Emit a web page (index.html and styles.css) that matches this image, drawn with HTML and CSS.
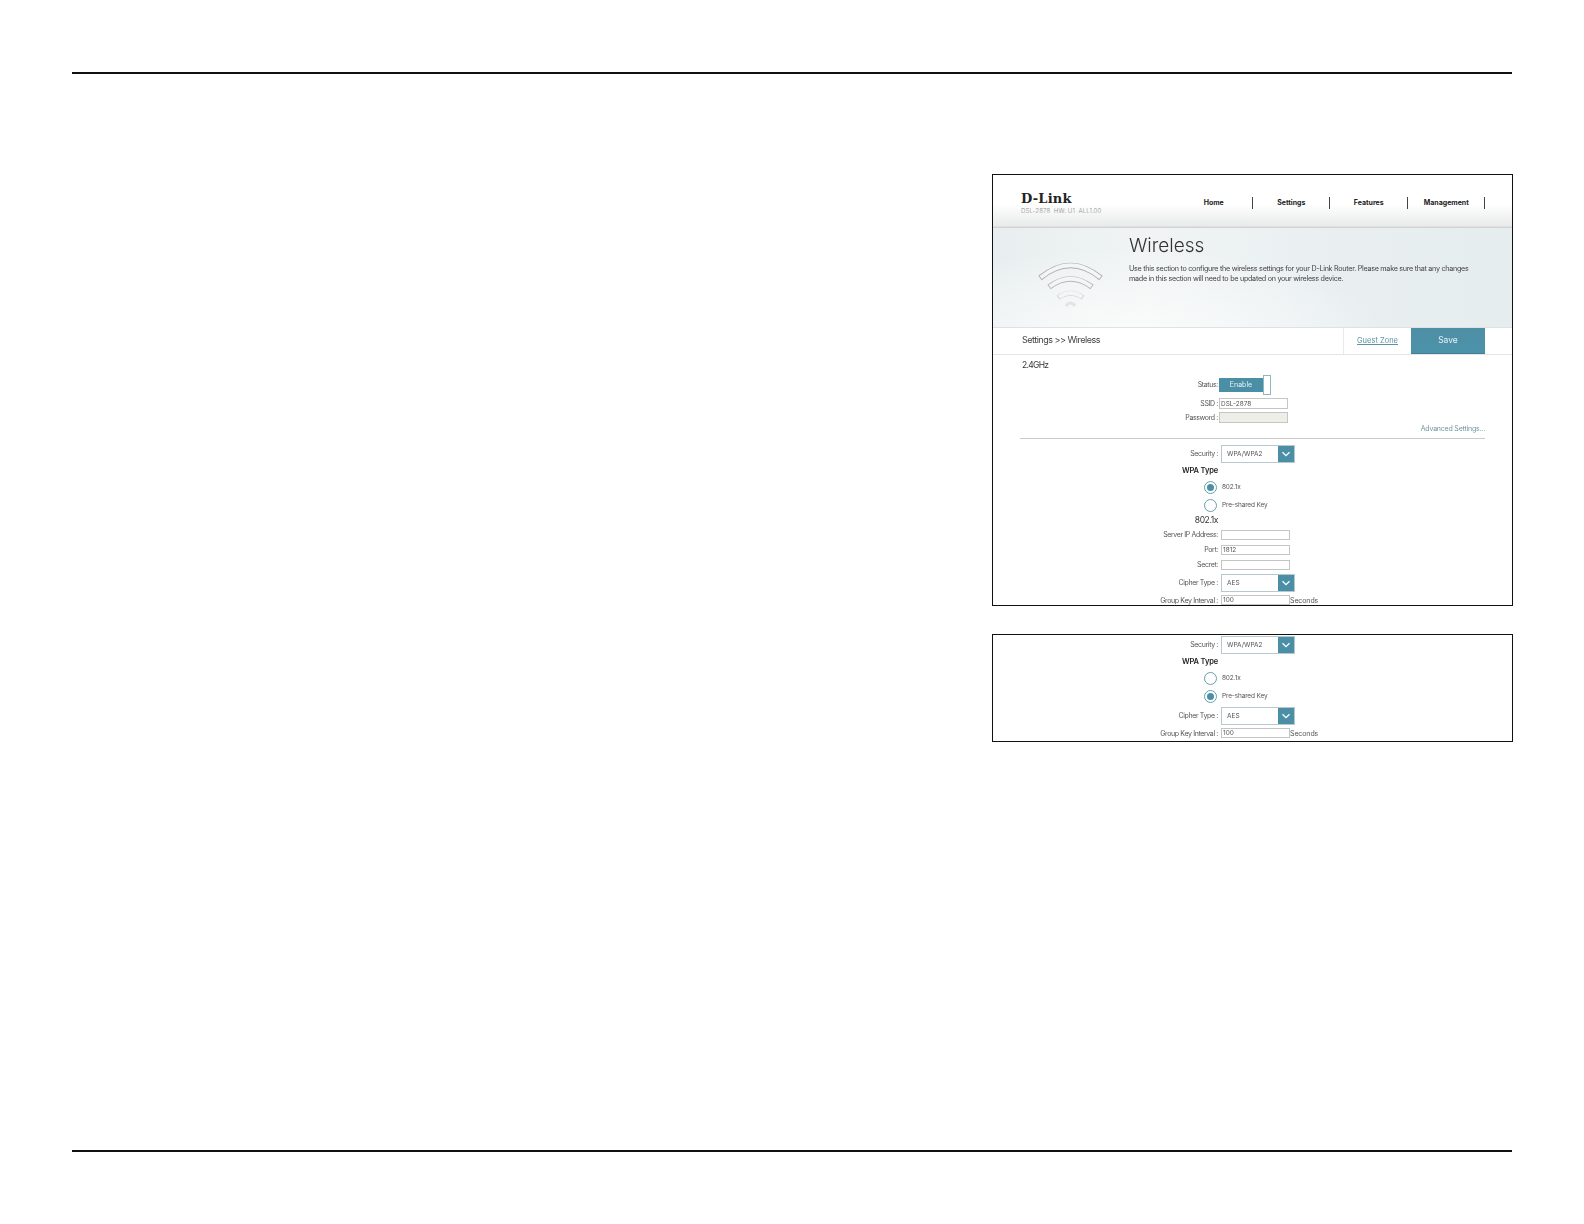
FILE: index.html
```html
<!DOCTYPE html>
<html lang="en">
<head>
<meta charset="utf-8">
<title>Wireless Settings</title>
<link rel="stylesheet" href="styles.css">
</head>
<body>
<div class="page">
  <main class="content">
    <section class="shot shot-main">
      <div class="shot-inner">
        <header class="topbar">
          <div class="brand">
            <div class="logo">D-Link</div>
            <div class="model">DSL-2878&nbsp; HW: U1 &nbsp;ALL1.00</div>
          </div>
          <nav class="nav">
            <span class="nav-item">Home</span>
            <span class="nav-item">Settings</span>
            <span class="nav-item">Features</span>
            <span class="nav-item">Management</span>
          </nav>
        </header>
        <div class="banner">
          <div class="banner-icon">
            <svg width="80" height="60" viewBox="0 0 80 60" aria-hidden="true">
              <g fill="none">
                <path class="arc-o1" d="M9 20 Q39.500 -5 70 20"/>
                <path class="arc-i" d="M9.700 19.500 Q39.500 -5 69.300 19.500"/>
                <path class="arc-o2" d="M18 29 Q39.500 13 61 29"/>
                <path class="arc-i" d="M18.700 28.500 Q39.500 13 60.300 28.500"/>
                <path class="arc-o3" d="M27 39.500 Q39.500 31 52 39.500"/>
                <path class="arc-i" d="M27.700 39 Q39.500 31 51.300 39"/>
                <path class="arc-o4" d="M35 48 Q39.500 42 44 48"/>
              </g>
            </svg>
          </div>
          <div class="banner-text">
            <h1 class="title">Wireless</h1>
            <p class="desc">Use this section to configure the wireless settings for your D-Link Router. Please make sure that any changes<br>made in this section will need to be updated on your wireless device.</p>
          </div>
        </div>
        <div class="crumbbar">
          <div class="crumb">Settings &gt;&gt; Wireless</div>
          <a class="guest">Guest Zone</a>
          <div class="save">Save</div>
        </div>
        <div class="form">
          <div class="section-title">2.4GHz</div>
          <div class="row row-status">
            <span class="label">Status:</span>
            <div class="toggle"><span class="toggle-on">Enable</span><span class="toggle-knob"></span></div>
          </div>
          <div class="row row-ssid">
            <span class="label">SSID :</span>
            <span class="field field-near">DSL-2878</span>
          </div>
          <div class="row row-ssid">
            <span class="label">Password :</span>
            <span class="field field-near field-off"></span>
          </div>
          <div class="advanced">Advanced Settings...</div>
          <div class="rule"></div>
          <div class="row row-select row-first">
            <span class="label">Security :</span>
            <div class="select"><span class="select-text">WPA/WPA2</span><span class="select-arrow"><svg width="10" height="6" viewBox="0 0 10 6"><path d="M1.5 1.2 5 4.6 8.500 1.200" fill="none" stroke="#fff" stroke-width="1.300"/></svg></span></div>
          </div>
          <div class="row row-heading"><span class="label label-strong">WPA Type</span></div>
          <div class="row row-radio">
            <span class="label"></span>
            <span class="radio radio-on"></span><span class="radio-text">802.1x</span>
          </div>
          <div class="row row-radio">
            <span class="label"></span>
            <span class="radio"></span><span class="radio-text">Pre-shared Key</span>
          </div>
          <div class="row row-sub"><span class="label label-sub">802.1x</span></div>
          <div class="row row-field"><span class="label">Server IP Address:</span><span class="field"></span></div>
          <div class="row row-field"><span class="label">Port:</span><span class="field">1812</span></div>
          <div class="row row-field"><span class="label">Secret:</span><span class="field"></span></div>
          <div class="row row-select row-cipher">
            <span class="label">Cipher Type :</span>
            <div class="select"><span class="select-text">AES</span><span class="select-arrow"><svg width="10" height="6" viewBox="0 0 10 6"><path d="M1.5 1.2 5 4.6 8.500 1.200" fill="none" stroke="#fff" stroke-width="1.300"/></svg></span></div>
          </div>
          <div class="row row-group">
            <span class="label">Group Key Interval :</span><span class="field">100</span><span class="unit">Seconds</span>
          </div>
        </div>
      </div>
    </section>

    <section class="shot shot-second">
      <div class="shot-inner">
        <div class="form form-second">
          <div class="row row-select">
            <span class="label">Security :</span>
            <div class="select"><span class="select-text">WPA/WPA2</span><span class="select-arrow"><svg width="10" height="6" viewBox="0 0 10 6"><path d="M1.5 1.2 5 4.6 8.500 1.200" fill="none" stroke="#fff" stroke-width="1.300"/></svg></span></div>
          </div>
          <div class="row row-heading2"><span class="label label-strong">WPA Type</span></div>
          <div class="row row-radio">
            <span class="label"></span>
            <span class="radio"></span><span class="radio-text">802.1x</span>
          </div>
          <div class="row row-radio">
            <span class="label"></span>
            <span class="radio radio-on"></span><span class="radio-text">Pre-shared Key</span>
          </div>
          <div class="row row-select row-cipher2">
            <span class="label">Cipher Type :</span>
            <div class="select"><span class="select-text">AES</span><span class="select-arrow"><svg width="10" height="6" viewBox="0 0 10 6"><path d="M1.5 1.2 5 4.6 8.500 1.200" fill="none" stroke="#fff" stroke-width="1.300"/></svg></span></div>
          </div>
          <div class="row row-group">
            <span class="label">Group Key Interval :</span><span class="field">100</span><span class="unit">Seconds</span>
          </div>
        </div>
      </div>
    </section>
  </main>
</div>
</body>
</html>
```
FILE: styles.css
```css
* { box-sizing: border-box; }
html, body { margin: 0; padding: 0; background: #fff; }
body { font-family: Inter, "Liberation Sans", sans-serif; color: #333; }

.page {
  width: 1584px;
  height: 1224px;
  padding: 72px 72px 0;
}
.content {
  height: 1080px;
  border-top: 2px solid #111;
  border-bottom: 2px solid #111;
  padding-top: 100px;
  display: flex;
  flex-direction: column;
  align-items: flex-end;
  gap: 28px;
}

.shot {
  width: 521px;
  margin-right: -1px;
  border: 1px solid #111;
  overflow: hidden;
  flex: none;
}
.shot-main { height: 432px; }
.shot-second { height: 108px; }
.shot-inner { filter: blur(0.4px); }

/* top bar */
.topbar {
  height: 53px;
  display: flex;
  justify-content: space-between;
  padding: 0 27px 0 28px;
  background: linear-gradient(#fff 0, #fff 55%, #e9eaea 96%, #c9cccc 100%);
}
.brand { padding-top: 17px; }
.logo {
  font-family: "DejaVu Serif", serif;
  font-weight: 700;
  font-size: 13px;
  line-height: 14px;
  letter-spacing: 0.2px;
  color: #222;
}
.model {
  margin-top: 1px;
  font-size: 6.200px;
  line-height: 8px;
  letter-spacing: 0.050px;
  font-weight: 300;
  color: #8f8f8f;
}
.nav { display: flex; padding-top: 22px; }
.nav-item {
  width: 77.500px;
  height: 12px;
  border-right: 1px solid #444;
  font-size: 7px;
  line-height: 12px;
  font-weight: 700;
  text-align: center;
  text-indent: 1px;
  color: #222;
}

/* banner */
.banner {
  height: 100px;
  display: flex;
  border-bottom: 1px solid #dfe2e2;
  background:
    radial-gradient(ellipse 260px 90px at 26% 110%, #fbfcfc 0, rgba(251,252,252,0) 100%),
    linear-gradient(90deg, #e8eeef 0, #f0f4f4 30%, #e9eff1 65%, #e6edef 100%);
}
.banner-icon { width: 136px; padding: 30px 0 0 38px; flex: none; }
.arc-o1 { stroke: #adafaf; stroke-width: 5.500; }
.arc-o2 { stroke: #b4b6b6; stroke-width: 5.500; }
.arc-o3 { stroke: #cfd1d1; stroke-width: 5; }
.arc-o4 { stroke: #e2e4e4; stroke-width: 3; }
.arc-i { stroke: #f4f6f6; stroke-width: 3.800; }
.banner-text { padding-top: 6px; }
.title {
  margin: 0;
  font-size: 19px;
  line-height: 24px;
  font-weight: 300;
  color: #333;
}
.desc {
  margin: 5.500px 0 0;
  white-space: nowrap;
  font-size: 7.200px;
  line-height: 10.500px;
  letter-spacing: -0.280px;
  color: #444;
}

/* breadcrumb */
.crumbbar {
  height: 27px;
  display: flex;
  align-items: stretch;
  padding-right: 27px;
  border-bottom: 1px solid #e4e6e6;
}
.crumb {
  flex: 1;
  padding-left: 29px;
  font-size: 9px;
  line-height: 24px;
  letter-spacing: -0.500px;
  color: #444;
}
.guest {
  width: 68px;
  border-left: 1px solid #e8eaea;
  font-size: 7.500px;
  line-height: 26px;
  text-align: center;
  text-decoration: underline;
  color: #5a93a6;
}
.save {
  width: 74px;
  background: linear-gradient(#4f8fa5, #4b93aa);
  border-bottom: 1px solid #3f7f95;
  color: #e8f2f5;
  font-size: 8.500px;
  line-height: 24px;
  text-align: center;
}

/* form */
.form { padding: 0 27px 0 0; }
.section-title {
  height: 20px;
  padding-left: 29px;
  font-size: 8.500px;
  line-height: 20px;
  letter-spacing: -0.700px;
  color: #333;
}
.row {
  display: flex;
  align-items: center;
  font-size: 7px;
  letter-spacing: -0.370px;
  color: #555;
}
.label {
  width: 225px;
  flex: none;
  text-align: right;
  white-space: nowrap;
}
.row-status .label, .row-select .label { margin-top: -1px; }
.label-strong { font-weight: 600; font-size: 7.500px; letter-spacing: -0.150px; color: #222; }
.label-sub { font-size: 8.500px; letter-spacing: -0.400px; color: #333; }
.row-status { height: 20px; gap: 1px; }
.row-ssid { height: 11px; margin-top: 3px; gap: 1px; }
.row-select { height: 18px; gap: 3px; }
.row-first { margin-top: 6px; }
.row-heading { height: 15px; }
.row-heading2 { height: 15px; }
.row-radio { height: 18px; }
.row-sub { height: 13px; padding-bottom: 2px; }
.row-field { height: 15px; gap: 3px; }
.row-cipher { margin-top: 2px; }
.row-cipher2 { margin-top: 2px; }
.row-group { height: 10px; margin-top: 3px; gap: 3px; }
.form-second { padding-top: 1px; }

.toggle { display: flex; align-items: center; }
.toggle-on {
  width: 44px;
  height: 14px;
  background: #4b8fa6;
  color: #e8f2f5;
  font-size: 7px;
  letter-spacing: 0;
  line-height: 14px;
  text-align: center;
}
.toggle-knob {
  width: 8px;
  height: 20px;
  border: 1px solid #8fb8c4;
  background: #fff;
}
.field {
  width: 69px;
  height: 10px;
  border: 1px solid #c4c6c6;
  background: #fff;
  font-size: 6.500px;
  letter-spacing: 0;
  line-height: 9px;
  padding-left: 1px;
  color: #555;
}
.field-near { height: 11px; line-height: 10px; }
.field-off { background: #eeeee8; }
.unit { margin-left: -3px; letter-spacing: -0.100px; color: #555; }

.advanced {
  height: 10px;
  margin-top: 1px;
  text-align: right;
  font-size: 7px;
  letter-spacing: -0.200px;
  line-height: 10px;
  color: #6d979f;
}
.rule { margin: 4px 0 0 27px; height: 1px; background: #c9cbcb; }

.select {
  width: 74px;
  height: 18px;
  display: flex;
  border: 1px solid #b5c9cf;
  background: #fff;
}
.select-text {
  flex: 1;
  padding-left: 5px;
  font-size: 6.500px;
  letter-spacing: 0;
  line-height: 16px;
  color: #555;
}
.select-arrow {
  width: 16px;
  background: #4b8fa6;
  display: flex;
  align-items: center;
  justify-content: center;
}

.radio {
  margin-left: -14.500px;
  margin-right: 5.500px;
  width: 13px;
  height: 13px;
  flex: none;
  border-radius: 50%;
  border: 1.300px solid #649fae;
  background: #fff;
  position: relative;
}
.radio-on::after {
  content: "";
  position: absolute;
  inset: 2px;
  border-radius: 50%;
  background: #4b8fa6;
}
.radio-text {
  font-size: 6.500px;
  letter-spacing: -0.150px;
  color: #555;
  line-height: 10px;
  margin-top: -1px;
}
```
